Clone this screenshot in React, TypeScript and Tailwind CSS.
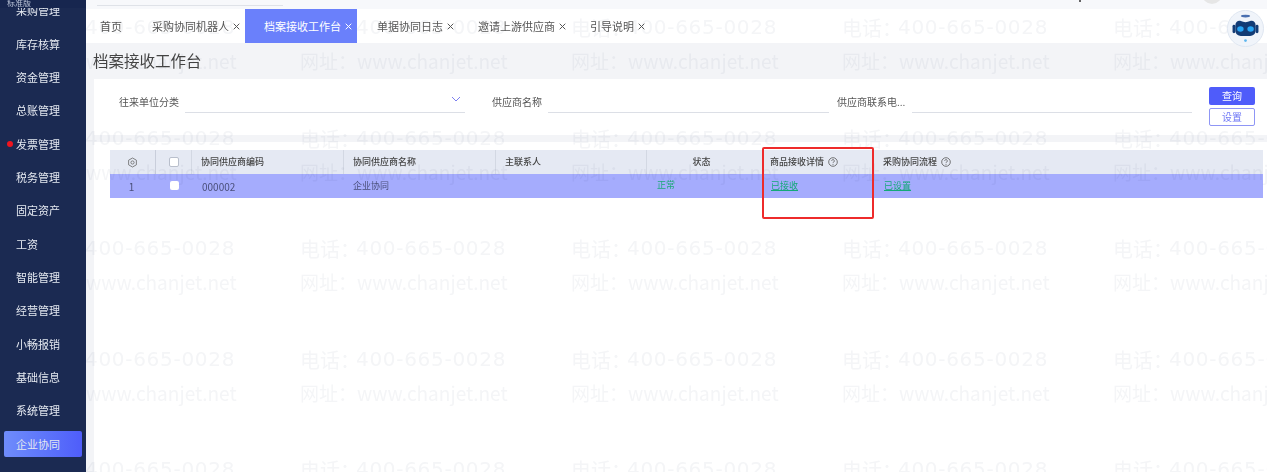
import React from "react";

const font = { fontFamily: '"Noto Sans CJK SC", "Liberation Sans", sans-serif' };
const menu = ["采购管理","库存核算","资金管理","总账管理","发票管理","税务管理","固定资产","工资","智能管理","经营管理","小畅报销","基础信息","系统管理","企业协同"];
const tabs = [
  { t: "采购协同机器人", w: "w-[93px] pl-0" },
  { t: "档案接收工作台", w: "w-[112px] pl-[19px] bg-[#6a80fb] text-white", active: true },
  { t: "单据协同日志", w: "w-[101px] pl-[20px]" },
  { t: "邀请上游供应商", w: "w-[112px] pl-[20px]" },
  { t: "引导说明", w: "w-[80px] pl-[20px]" },
];
const X = ({ c = "#555" }: { c?: string }) => (
  <svg width="7" height="7" viewBox="0 0 7 7" className="shrink-0"><path d="M.7.7l5.600 5.600M6.300.7L.7 6.300" stroke={c} strokeWidth="1" /></svg>
);
const Help = () => (
  <svg width="10" height="10" viewBox="0 0 10 10" className="shrink-0"><circle cx="5" cy="5" r="4.300" fill="none" stroke="#555" strokeWidth=".8" /><path d="M3.700 3.900a1.300 1.300 0 1 1 2 1.100c-.5.3-.7.5-.7 1" fill="none" stroke="#555" strokeWidth=".8" /><circle cx="5" cy="7.300" r=".5" fill="#555" /></svg>
);
const Field = ({ label, lw, fw }: { label: string; lw: string; fw: string }) => (
  <div className="flex items-center">
    <span className={`${lw} shrink-0 translate-y-[2px] text-[10px] leading-[14px] text-[#555]`}>{label}</span>
    <div className={`${fw} h-[26px] border-b border-[#dcdfe6]`} />
  </div>
);
const Cell = ({ w, className = "", children }: { w: string; className?: string; children?: React.ReactNode }) => (
  <div className={`${w} shrink-0 h-full flex items-center ${className}`}>{children}</div>
);
const Robot = () => (
  <svg width="37" height="37" viewBox="0 0 40 40">
    <circle cx="20" cy="20" r="19.500" fill="#f0f4fa" stroke="#dde5f0" />
    <ellipse cx="20" cy="6.500" rx="5" ry="1.500" fill="#4a6fb0" />
    <path d="M9 17c0-4 3-6 6-5 3 1.500 7 1.500 10 0 3-1 6 1 6 5v5c0 4-3 6-6 6H15c-3 0-6-2-6-6z" fill="#123b75" />
    <ellipse cx="14.500" cy="20.500" rx="3.500" ry="3" fill="#27a5f5" />
    <ellipse cx="25.500" cy="20.500" rx="3.500" ry="3" fill="#27a5f5" />
    <rect x="6" y="16" width="3" height="9" rx="1.500" fill="#123b75" />
    <rect x="31" y="16" width="3" height="9" rx="1.500" fill="#123b75" />
    <circle cx="20" cy="33" r="1.500" fill="#5fb7ee" />
  </svg>
);

export default function App() {
  const wmRows = [0, 1, 2, 3, 4];
  const wmCols = [0, 1, 2, 3, 4];
  return (
    <div className="relative flex h-[472px] w-[1267px] overflow-hidden bg-white text-[#444]" style={font}>
      <aside className="relative z-20 w-[86px] shrink-0 overflow-hidden bg-[#1b2a52]">
        <div className="absolute inset-x-0 top-0 z-10 h-[8px] overflow-hidden bg-[#17264f] pl-[7px] text-[8px] leading-[6px] text-[#b9c2d6]">标准版</div>
        <div className="-mt-[6px] flex flex-col">
          {menu.map((m, i) => (
            <div key={m} className="relative flex h-[33.33px] items-center justify-start pl-[16px] text-[11px] text-[#e4e8f0]">
              {i === 13 && <div className="absolute inset-x-[4px] top-[3.500px] h-[26px] rounded-[2px] bg-gradient-to-r from-[#6f8cfb] to-[#4f5dfa]" />}
              {i === 4 && <span className="absolute left-[7px] h-[6px] w-[6px] rounded-full bg-[#f0141e]" />}
              <span className="relative">{m}</span>
            </div>
          ))}
        </div>
      </aside>

      <main className="flex min-w-0 flex-1 flex-col bg-[#f3f4f7]">
        <div className="relative h-[9px] shrink-0 bg-[#f7f8fb]">
          <div className="absolute left-[11px] top-[5px] h-px w-[186px] bg-[#dfe2e8]" />
          <div className="absolute left-[993px] top-0 h-[2px] w-[2px] rounded-full bg-[#333]" />
          <div className="absolute left-[1116px] -top-[16px] h-[20px] w-[20px] rounded-full bg-[#e6e6e6]" />
        </div>
        <div className="flex h-[34px] shrink-0 items-center bg-white text-[11px] text-[#555]">
          <div className="w-[66px] shrink-0 pl-[14px]">首页</div>
          {tabs.map((t) => (
            <div key={t.t} className={`${t.w} relative z-20 flex h-full shrink-0 items-center justify-start gap-[4px]`}>
              <span>{t.t}</span>
              <X c={t.active ? "#fff" : "#555"} />
            </div>
          ))}
        </div>
        <div className="flex h-[36px] shrink-0 items-center pl-[7px] text-[15.500px] text-[#444]">档案接收工作台</div>

        <div className="ml-[8px] flex h-[56px] shrink-0 items-start bg-white pl-[25px] pt-[8px]">
          <div className="relative">
            <Field label="往来单位分类" lw="w-[66px]" fw="w-[280px]" />
            <svg width="10" height="6" viewBox="0 0 10 6" className="absolute right-[4px] top-[9px]"><path d="M1 1l4 4 4-4" fill="none" stroke="#7d80f0" /></svg>
          </div>
          <div className="w-[27px]" />
          <Field label="供应商名称" lw="w-[56px]" fw="w-[281px]" />
          <div className="w-[8px]" />
          <Field label="供应商联系电..." lw="w-[75px]" fw="w-[280px]" />
          <div className="ml-[17px] flex w-[46px] flex-col gap-[3px] text-[10px]">
            <button className="h-[18px] rounded-[2px] bg-[#4f5cfa] leading-[18px] text-white">查询</button>
            <button className="h-[18px] rounded-[2px] border border-[#8f96f5] bg-white leading-[16px] text-[#6f78f5]">设置</button>
          </div>
        </div>
        <div className="h-[7px] shrink-0" />

        <div className="ml-[8px] flex-1 bg-white pl-[16px] pt-[8px]">
          <div className="w-[1153px] text-[9px]">
            <div className="flex h-[24px] items-center bg-[#e5e9f3] font-medium text-[#444]">
              <Cell w="w-[46px]" className="justify-center border-r border-[#c9cedb]">
                <svg width="11" height="11" viewBox="0 0 11 11"><path d="M5.500 1l3.900 2.200v4.600L5.500 10 1.600 7.800V3.200z" fill="none" stroke="#666" strokeWidth=".8" /><circle cx="5.500" cy="5.500" r="1.600" fill="none" stroke="#666" strokeWidth=".8" /></svg>
              </Cell>
              <Cell w="w-[36px]" className="justify-center border-r border-[#d3d8e3]">
                <span className="h-[10px] w-[10px] rounded-[2px] border border-[#b9bfcc] bg-white" />
              </Cell>
              <Cell w="w-[152px]" className="border-r border-[#d3d8e3] pl-[9px]">协同供应商编码</Cell>
              <Cell w="w-[152px]" className="border-r border-[#d3d8e3] pl-[9px]">协同供应商名称</Cell>
              <Cell w="w-[151px]" className="border-r border-[#d3d8e3] pl-[9px]">主联系人</Cell>
              <Cell w="w-[121px]" className="justify-center pr-[12px]">状态</Cell>
              <Cell w="w-[114px]" className="gap-[4px] pl-[2px]">商品接收详情 <Help /></Cell>
              <Cell w="w-[381px]" className="gap-[4px] pl-[1px]">采购协同流程 <Help /></Cell>
            </div>
            <div className="flex h-[24px] items-center bg-[#a5acfd] text-[#4a4f7a]">
              <Cell w="w-[46px]" className="justify-center pr-[3px] text-[10px]">1</Cell>
              <Cell w="w-[36px]" className="justify-center"><span className="h-[9px] w-[9px] -translate-y-px rounded-[2px] bg-white" /></Cell>
              <Cell w="w-[152px]" className="pl-[10px] text-[10px]">000002</Cell>
              <Cell w="w-[152px]" className="pl-[9px]">企业协同</Cell>
              <Cell w="w-[151px]" />
              <Cell w="w-[121px]" className="pl-[10px] text-[#1fa97a]"><span className="-translate-y-px">正常</span></Cell>
              <Cell w="w-[114px]" className="pl-[3px] text-[#14a878] underline">已接收</Cell>
              <Cell w="w-[381px]" className="pl-[2px] text-[#14a878] underline">已设置</Cell>
            </div>
          </div>
        </div>
      </main>

      <div className="pointer-events-none absolute inset-0 z-10 mix-blend-multiply">
        {wmRows.map((r) => wmCols.map((c) => (
          <div key={`${r}-${c}`} className="absolute whitespace-nowrap leading-[33px] text-[#f4f5f7]" style={{ left: 29 + c * 271, top: 11 + r * 110.5 }}>
            <div className="flex text-[20px]"><span className="w-[56px]">电话：</span><span className="font-['DejaVu_Sans'] tracking-[0.700px]">400-665-0028</span></div>
            <div className="text-[19px]">网址：www.chanjet.net</div>
          </div>
        )))}
      </div>

      <div className="absolute left-[762px] top-[147px] z-30 h-[72px] w-[112px] rounded-[2px] border-2 border-[#ee2b2b]" />
      <div className="absolute left-[1227px] top-[10px] z-30"><Robot /></div>
    </div>
  );
}
